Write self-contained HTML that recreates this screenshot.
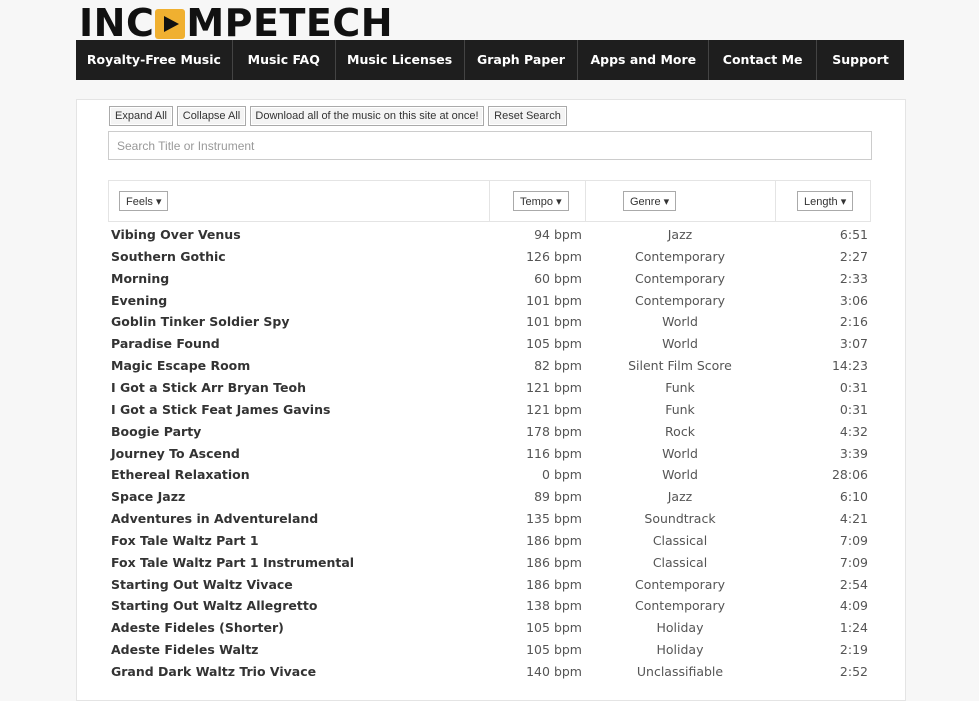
<!DOCTYPE html><html><head><style>
body{margin:0;width:979px;height:684px;overflow:hidden;background:#f7f7f7;font-family:"DejaVu Sans","Liberation Sans",sans-serif;position:relative}
.logo{position:absolute;left:79px;top:1px;font:bold 38px "DejaVu Sans",sans-serif;letter-spacing:0.5px;color:#111;white-space:nowrap}
.play{display:inline-block;width:30px;height:30px;background:#f0b030;border-radius:3px;vertical-align:-3px;position:relative;margin:0 1px}
.play:after{content:"";position:absolute;left:9px;top:7px;border-left:15px solid #111;border-top:8px solid transparent;border-bottom:8px solid transparent}
.nav{position:absolute;left:76px;top:40px;width:828px;height:40px;background:#1e1e1e;display:flex}
.nav div{color:#fff;font-weight:bold;font-size:12.5px;line-height:40px;text-align:center;border-right:1px solid #444}
.panel{position:absolute;left:76px;top:99px;width:828px;height:600px;background:#fff;border:1px solid #e4e4e4}
.btn{position:absolute;top:106px;height:18px;border:1px solid #aaa;background:#f4f4f4;font:11px "Liberation Sans",sans-serif;color:#333;line-height:18px;text-align:center;box-shadow:inset 0 0 0 1px #fff}
.search{position:absolute;left:108px;top:131px;height:29px;border:1px solid #ccc;font:12px "Liberation Sans",sans-serif;color:#999;line-height:29px;box-sizing:border-box;width:764px;padding-left:8px}
.hdr{position:absolute;left:108px;top:180px;width:763px;height:42px;border:1px solid #e4e4e4;box-sizing:border-box}
.vl{position:absolute;top:180px;height:42px;border-left:1px solid #e4e4e4}
.dd{position:absolute;top:191px;height:20px;border:1px solid #aaa;font:11px "Liberation Sans",sans-serif;line-height:20px;padding:0 6px;color:#333;background:#fff;box-sizing:border-box}
.row{position:absolute;left:111px;width:760px;height:22px;font-size:12.5px;color:#555;line-height:22px}
.row b{position:absolute;left:0;color:#333}
.row .t{position:absolute;right:289px}
.row .g{position:absolute;left:469px;width:200px;text-align:center}
.row .l{position:absolute;right:3px}
</style></head><body>
<div class="logo">INC<span class="play"></span>MPETECH</div>
<div class="nav">
<div style="width:156px">Royalty-Free Music</div><div style="width:102px">Music FAQ</div><div style="width:128px">Music Licenses</div><div style="width:113px">Graph Paper</div><div style="width:130px">Apps and More</div><div style="width:107px">Contact Me</div><div style="width:87px;border:0">Support</div></div>
<div class="panel"></div>
<div class="btn" style="left:109px;width:62px">Expand All</div>
<div class="btn" style="left:177px;width:67px">Collapse All</div>
<div class="btn" style="left:250px;width:232px">Download all of the music on this site at once!</div>
<div class="btn" style="left:488px;width:77px">Reset Search</div>
<div class="search">Search Title or Instrument</div>
<div class="hdr"></div><div class="vl" style="left:489px"></div><div class="vl" style="left:585px"></div><div class="vl" style="left:775px"></div>
<div class="dd" style="left:119px">Feels ▾</div><div class="dd" style="left:513px">Tempo ▾</div><div class="dd" style="left:623px">Genre ▾</div><div class="dd" style="left:797px">Length ▾</div>
<div id="rows"></div>
<script>
var d=[["Vibing Over Venus",94,"Jazz","6:51"],["Southern Gothic",126,"Contemporary","2:27"],["Morning",60,"Contemporary","2:33"],["Evening",101,"Contemporary","3:06"],["Goblin Tinker Soldier Spy",101,"World","2:16"],["Paradise Found",105,"World","3:07"],["Magic Escape Room",82,"Silent Film Score","14:23"],["I Got a Stick Arr Bryan Teoh",121,"Funk","0:31"],["I Got a Stick Feat James Gavins",121,"Funk","0:31"],["Boogie Party",178,"Rock","4:32"],["Journey To Ascend",116,"World","3:39"],["Ethereal Relaxation",0,"World","28:06"],["Space Jazz",89,"Jazz","6:10"],["Adventures in Adventureland",135,"Soundtrack","4:21"],["Fox Tale Waltz Part 1",186,"Classical","7:09"],["Fox Tale Waltz Part 1 Instrumental",186,"Classical","7:09"],["Starting Out Waltz Vivace",186,"Contemporary","2:54"],["Starting Out Waltz Allegretto",138,"Contemporary","4:09"],["Adeste Fideles (Shorter)",105,"Holiday","1:24"],["Adeste Fideles Waltz",105,"Holiday","2:19"],["Grand Dark Waltz Trio Vivace",140,"Unclassifiable","2:52"]];
var h="";d.forEach(function(r,i){h+='<div class="row" style="top:'+(224+i*21.85)+'px"><b>'+r[0]+'</b><span class="t">'+r[1]+' bpm</span><span class="g">'+r[2]+'</span><span class="l">'+r[3]+'</span></div>'});
document.getElementById("rows").innerHTML=h;
</script>
</body></html>
